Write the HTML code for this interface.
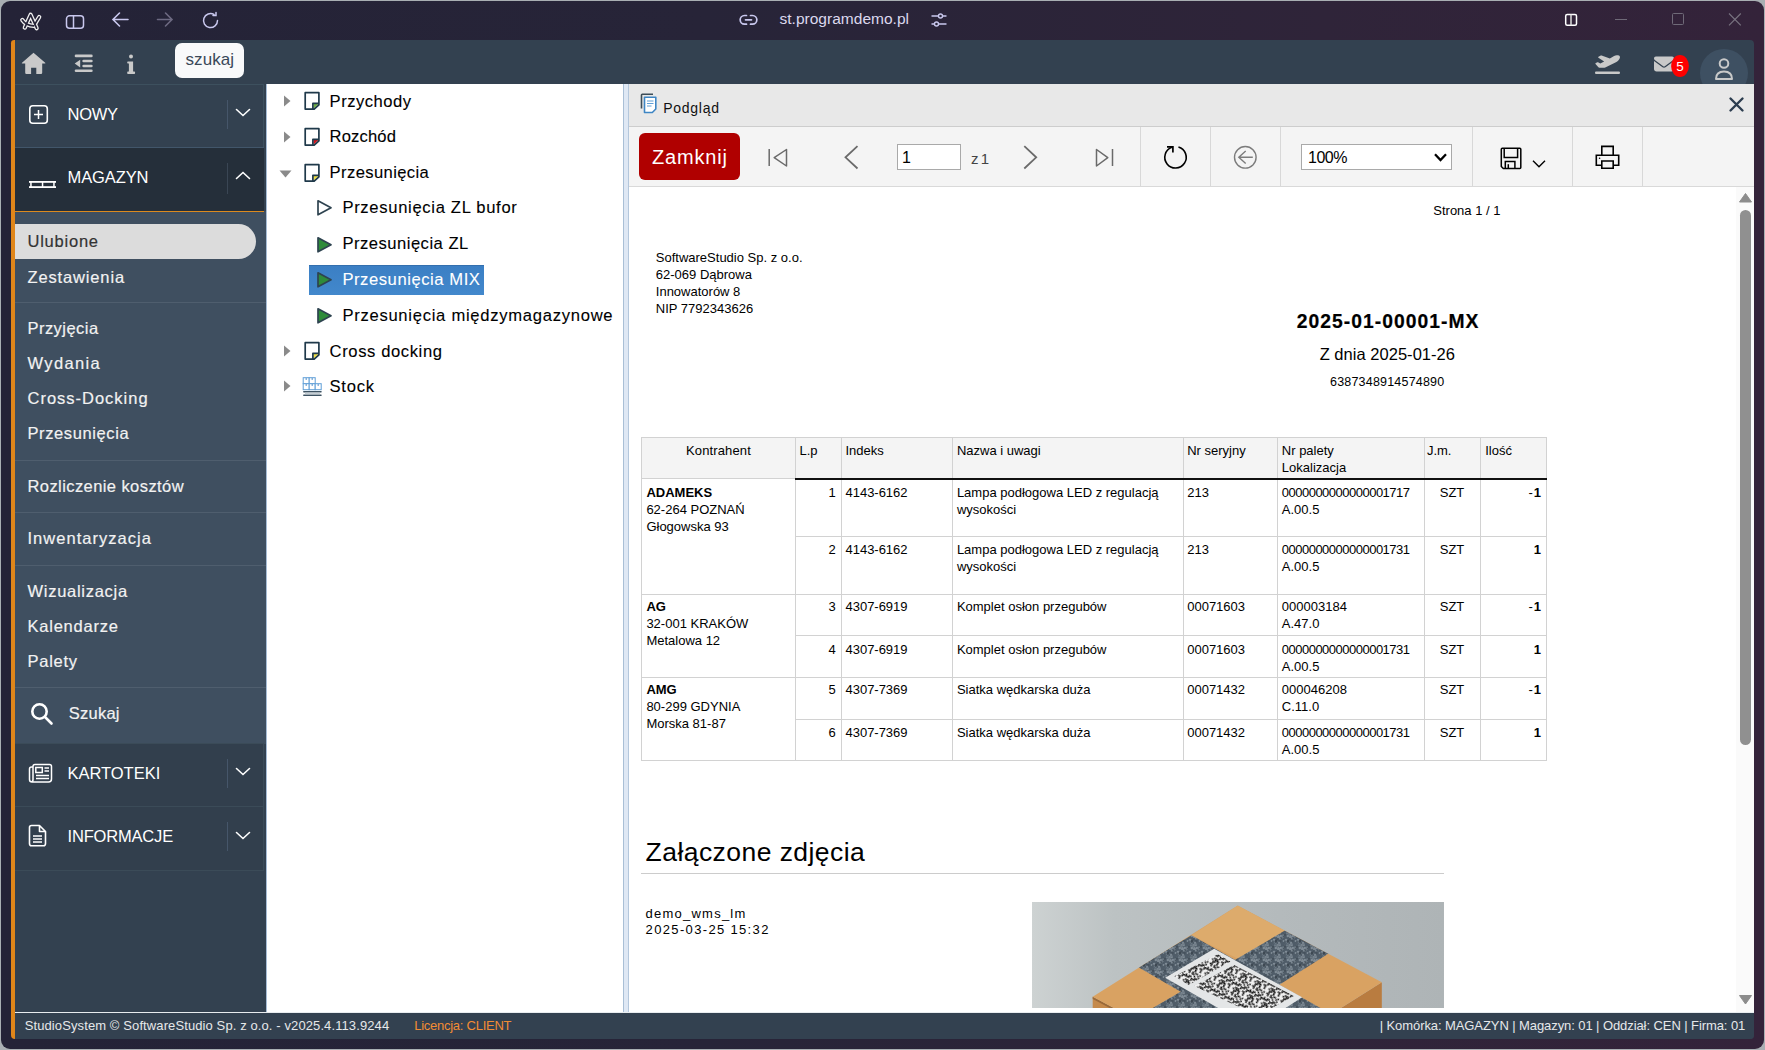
<!DOCTYPE html><html><head><meta charset="utf-8"><style>*{box-sizing:border-box;margin:0;padding:0}
html,body{width:1765px;height:1050px;overflow:hidden;background:#a9afb3;font-family:"Liberation Sans",sans-serif;position:relative}
.a{position:absolute}
.t{position:absolute;white-space:nowrap;font-family:"Liberation Sans",sans-serif}
svg{position:absolute;overflow:visible}
</style></head><body><div class="a" style="left:1px;top:1px;width:1763px;height:1048px;border-radius:9px;background:linear-gradient(90deg,#242337 0%,#272438 40%,#2f2439 75%,#34233a 100%)"></div>
<div class="a" style="left:11px;top:40px;width:1743px;height:999px;background:#334150;border-radius:5px 4px 4px 6px"></div>
<div class="a" style="left:11px;top:40px;width:4px;height:999px;background:#e0861a;border-radius:5px 0 0 6px"></div>
<svg style="left:16px;top:8px;" width="30" height="26" viewBox="0 0 30 26"><g fill="none" stroke-linecap="round" stroke-linejoin="round"><g stroke="#f0f0f0" stroke-width="4.3"><path d="M8.8 19.6 L14.6 6.8 L20.6 20.2"/><path d="M6.3 12 Q10 17.5 17.8 17.8"/><path d="M19.2 15.6 L23.2 9"/></g><g stroke="#252337" stroke-width="1.7"><path d="M8.8 19.6 L14.6 6.8 L20.6 20.2"/><path d="M6.3 12 Q10 17.5 17.8 17.8"/><path d="M19.2 15.6 L23.2 9"/></g></g></svg>
<svg style="left:65px;top:14px;" width="20" height="16" viewBox="0 0 20 16"><g fill="none" stroke="#c9c8ee" stroke-width="1.5"><rect x="1.5" y="1.8" width="17" height="12.5" rx="3"/><line x1="8.5" y1="1.8" x2="8.5" y2="14.3"/></g></svg>
<svg style="left:111px;top:11px;" width="18" height="18" viewBox="0 0 18 18"><g fill="none" stroke="#c9c8ee" stroke-width="1.6" stroke-linecap="round"><path d="M17 8.5 H2.5 M8.5 2 L2 8.5 L8.5 15"/></g></svg>
<svg style="left:156px;top:11px;" width="18" height="18" viewBox="0 0 18 18"><g fill="none" stroke="#6d6a82" stroke-width="1.6" stroke-linecap="round"><path d="M1.5 8.5 H16 M9.5 2 L16 8.5 L9.5 15"/></g></svg>
<svg style="left:201px;top:11px;" width="19" height="19" viewBox="0 0 19 19"><g fill="none" stroke="#c9c8ee" stroke-width="1.5" stroke-linecap="round"><path d="M16.5 9.5 A7 7 0 1 1 13 3.5 M15 1.5 V4.5 H12"/></g></svg>
<svg style="left:739px;top:13px;" width="19" height="14" viewBox="0 0 19 14"><g fill="none" stroke="#c9c8ee" stroke-width="1.7" stroke-linecap="round"><path d="M7.5 2.5 H5.5 A4.3 4.3 0 0 0 5.5 11.2 H7.5 M11.5 2.5 H13.5 A4.3 4.3 0 0 1 13.5 11.2 H11.5 M6.5 6.85 H12.5"/></g></svg>
<div class="t" style="left:779.50px;top:11.38px;font-size:15.5px;line-height:15.5px;color:#dcd9ee;letter-spacing:0.017px;">st.programdemo.pl</div>
<svg style="left:930px;top:12px;" width="18" height="16" viewBox="0 0 18 16"><g fill="none" stroke="#c9c8ee" stroke-width="1.4" stroke-linecap="round"><path d="M2 4 H16 M2 12 H16"/><circle cx="10.5" cy="4" r="2" fill="#282438"/><circle cx="6.5" cy="12" r="2" fill="#282438"/></g></svg>
<svg style="left:1563px;top:12px;" width="16" height="16" viewBox="0 0 16 16"><g fill="none" stroke="#fff" stroke-width="1.5"><rect x="2.7" y="2.5" width="10.8" height="10.8" rx="1.5"/><line x1="8" y1="2.5" x2="8" y2="13.3" stroke="#ddd"/></g></svg>
<div class="a" style="left:1615px;top:19px;width:12px;height:1.2px;background:#6f6a78"></div>
<div class="a" style="left:1672px;top:13px;width:12px;height:12px;border:1.2px solid #6f6a78;border-radius:1.5px"></div>
<svg style="left:1728px;top:13px;" width="14" height="13" viewBox="0 0 14 13"><g stroke="#77727f" stroke-width="1.2"><path d="M1 0.5 L12.8 12.3 M12.8 0.5 L1 12.3"/></g></svg>
<div class="a" style="left:15px;top:84px;width:1739px;height:1px;background:#3c5461"></div>
<svg style="left:21px;top:52px;" width="26" height="23" viewBox="0 0 26 23"><path fill="#c9c9c9" d="M12.5 0.8 L24.2 10.8 Q24.8 11.5 24 11.5 H21.2 V20.8 Q21.2 22 20 22 H15.3 V15.7 H10.1 V22 H5.4 Q4.2 22 4.2 20.8 V11.5 H1.2 Q0.4 11.5 1 10.8 Z"/></svg>
<svg style="left:73px;top:53px;" width="22" height="21" viewBox="0 0 22 21"><g fill="#c9c9c9"><rect x="1.7" y="1.6" width="18" height="2.6" rx="1.3"/><rect x="9.3" y="6.7" width="10.4" height="2.6" rx="1.3"/><rect x="9.3" y="11.7" width="10.4" height="2.6" rx="1.3"/><rect x="1.7" y="16.5" width="18" height="2.6" rx="1.3"/><path d="M1.7 10.5 L7.2 6.7 V14.4 Z"/></g></svg>
<svg style="left:126px;top:53px;" width="11" height="22" viewBox="0 0 11 22"><g fill="#c9c9c9"><circle cx="5" cy="3.6" r="2"/><path d="M1.9 8.5 H7.1 V18.5 H8.3 Q9.1 18.5 9.1 19.5 V20 Q9.1 20.9 8.3 20.9 H1.9 Q1.2 20.9 1.2 20 V19.5 Q1.2 18.5 1.9 18.5 H2.9 V10.6 H1.9 Q1.2 10.6 1.2 9.6 V9.3 Q1.2 8.5 1.9 8.5 Z"/></g></svg>
<div class="a" style="left:175px;top:43px;width:69px;height:35px;background:#f8f9fa;border-radius:7px"></div>
<div class="t" style="left:185.50px;top:51.21px;font-size:17px;line-height:17px;color:#3a4858;letter-spacing:0.064px;">szukaj</div>
<svg style="left:1595px;top:54px;" width="25" height="20" viewBox="0 0 640 512"><path fill="#c9c9c9" d="M381 114.9L186.1 41.8c-16.7-6.2-35.2-5.3-51.1 2.7L89.1 67.4C78 73 77.2 88.5 87.6 95.2l146.9 94.5L136 240 77.8 214.1c-8.7-3.9-18.8-3.7-27.3 .6L18.3 230.8c-9.3 4.7-11.8 16.8-5 24.7l73.1 85.3c6.1 7.1 15 11.2 24.3 11.2H248.4c5 0 9.9-1.2 14.3-3.4L535.6 212.2c46.5-23.3 82.5-63.3 100.8-112C648.9 66.9 624.6 32 588.9 32H558.6c-24.1 0-47.9 5.7-69.5 16.5L381 114.9zM0 480c0 17.7 14.3 32 32 32H608c17.7 0 32-14.3 32-32s-14.3-32-32-32H32c-17.7 0-32 14.3-32 32z"/></svg>
<svg style="left:1654px;top:53.5px;" width="20" height="20" viewBox="0 0 512 512"><path fill="#c9c9c9" d="M48 64C21.5 64 0 85.5 0 112c0 15.1 7.1 29.3 19.2 38.4L236.8 313.6c11.4 8.5 27 8.5 38.4 0L492.8 150.4c12.1-9.1 19.2-23.3 19.2-38.4c0-26.5-21.5-48-48-48H48zM0 176V384c0 35.3 28.7 64 64 64H448c35.3 0 64-28.7 64-64V176L294.4 339.2c-22.8 17.1-54 17.1-76.8 0L0 176z"/></svg>
<svg style="left:1671px;top:55px;" width="18" height="22" viewBox="0 0 18 22"><ellipse cx="9" cy="11" rx="8.9" ry="11.1" fill="#ff0000"/></svg>
<div class="t" style="left:1676.35px;top:59.77px;font-size:13.5px;line-height:13.5px;color:#fff;">5</div>
<svg style="left:1700px;top:49px;clip-path:inset(0 0 13px 0)" width="48" height="48" viewBox="0 0 48 48"><circle cx="24" cy="24" r="24" fill="#3e5062"/><g fill="none" stroke="#c9c9c9" stroke-width="2"><circle cx="24" cy="14.5" r="4.3"/><path d="M16 30 Q16 22.5 24 22.5 Q32 22.5 32 30 Z" stroke-linejoin="round"/></g></svg>
<div class="a" style="left:15px;top:84px;width:251px;height:928px;background:#334150"></div>
<div class="a" style="left:15px;top:211px;width:251px;height:533px;background:#3f4f60"></div>
<div class="a" style="left:15px;top:84px;width:249px;height:64px;background:#334150;border:1px solid #3d505e;border-left:none"></div>
<div class="a" style="left:15px;top:148px;width:249px;height:63px;background:#252f3a"></div>
<div class="a" style="left:15px;top:147px;width:249px;height:1px;background:#42566a"></div>
<div class="a" style="left:15px;top:211px;width:249px;height:1px;background:#dc8a1e"></div>
<div class="a" style="left:227px;top:100px;width:1px;height:29px;background:#46566a"></div>
<div class="a" style="left:227px;top:163px;width:1px;height:31px;background:#3a4654"></div>
<svg style="left:235px;top:108px;" width="16" height="9" viewBox="0 0 16 9"><path d="M1.5 1.5 L8 7.5 L14.5 1.5" fill="none" stroke="#fff" stroke-width="1.6" stroke-linecap="round"/></svg>
<svg style="left:235px;top:171px;" width="16" height="9" viewBox="0 0 16 9"><path d="M1.5 7.5 L8 1.5 L14.5 7.5" fill="none" stroke="#fff" stroke-width="1.6" stroke-linecap="round"/></svg>
<svg style="left:28px;top:104px;" width="22" height="22" viewBox="0 0 22 22"><g fill="none" stroke="#fff" stroke-width="1.6"><rect x="1.8" y="1.8" width="17.5" height="17.5" rx="3"/><path d="M10.5 6 V15 M6 10.5 H15" stroke-width="1.5"/></g></svg>
<div class="t" style="left:67.50px;top:106.23px;font-size:16.5px;line-height:16.5px;color:#fff;letter-spacing:-0.277px;">NOWY</div>
<svg style="left:28px;top:180px;" width="30" height="10" viewBox="0 0 30 10"><g fill="#fff"><rect x="1" y="1" width="27" height="1.8"/><rect x="1" y="6.2" width="27" height="1.8"/><rect x="2.2" y="1" width="1.5" height="7"/><rect x="13.8" y="1" width="1.5" height="7"/><rect x="25.2" y="1" width="1.5" height="7"/></g></svg>
<div class="t" style="left:67.50px;top:169.03px;font-size:16.5px;line-height:16.5px;color:#fff;letter-spacing:-0.099px;">MAGAZYN</div>
<div class="a" style="left:15px;top:224px;width:241px;height:35px;background:#dcdcdc;border-radius:0 17.5px 17.5px 0"></div>
<div class="t" style="left:27.50px;top:232.83px;font-size:16.5px;line-height:16.5px;color:#333;letter-spacing:0.768px;-webkit-text-stroke:0.18px currentColor;">Ulubione</div>
<div class="t" style="left:27.50px;top:268.83px;font-size:16.5px;line-height:16.5px;color:#f2f2f2;letter-spacing:0.854px;-webkit-text-stroke:0.18px currentColor;">Zestawienia</div>
<div class="t" style="left:27.50px;top:320.33px;font-size:16.5px;line-height:16.5px;color:#f2f2f2;letter-spacing:0.455px;-webkit-text-stroke:0.18px currentColor;">Przyjęcia</div>
<div class="t" style="left:27.50px;top:355.03px;font-size:16.5px;line-height:16.5px;color:#f2f2f2;letter-spacing:1.372px;-webkit-text-stroke:0.18px currentColor;">Wydania</div>
<div class="t" style="left:27.50px;top:390.03px;font-size:16.5px;line-height:16.5px;color:#f2f2f2;letter-spacing:0.992px;-webkit-text-stroke:0.18px currentColor;">Cross-Docking</div>
<div class="t" style="left:27.50px;top:424.83px;font-size:16.5px;line-height:16.5px;color:#f2f2f2;letter-spacing:0.602px;-webkit-text-stroke:0.18px currentColor;">Przesunięcia</div>
<div class="t" style="left:27.50px;top:478.33px;font-size:16.5px;line-height:16.5px;color:#f2f2f2;letter-spacing:0.417px;-webkit-text-stroke:0.18px currentColor;">Rozliczenie kosztów</div>
<div class="t" style="left:27.50px;top:530.03px;font-size:16.5px;line-height:16.5px;color:#f2f2f2;letter-spacing:1.025px;-webkit-text-stroke:0.18px currentColor;">Inwentaryzacja</div>
<div class="t" style="left:27.50px;top:583.03px;font-size:16.5px;line-height:16.5px;color:#f2f2f2;letter-spacing:0.718px;-webkit-text-stroke:0.18px currentColor;">Wizualizacja</div>
<div class="t" style="left:27.50px;top:618.03px;font-size:16.5px;line-height:16.5px;color:#f2f2f2;letter-spacing:0.770px;-webkit-text-stroke:0.18px currentColor;">Kalendarze</div>
<div class="t" style="left:27.50px;top:653.03px;font-size:16.5px;line-height:16.5px;color:#f2f2f2;letter-spacing:0.749px;-webkit-text-stroke:0.18px currentColor;">Palety</div>
<div class="a" style="left:15px;top:302px;width:251px;height:1px;background:#4f5e6e"></div>
<div class="a" style="left:15px;top:460px;width:251px;height:1px;background:#4f5e6e"></div>
<div class="a" style="left:15px;top:512px;width:251px;height:1px;background:#4f5e6e"></div>
<div class="a" style="left:15px;top:565px;width:251px;height:1px;background:#4f5e6e"></div>
<div class="a" style="left:15px;top:687px;width:251px;height:1px;background:#4f5e6e"></div>
<svg style="left:30px;top:702px;" width="24" height="24" viewBox="0 0 24 24"><g fill="none" stroke="#fff" stroke-width="2.6" stroke-linecap="round"><circle cx="9.5" cy="9.5" r="7.2"/><path d="M15 15 L21.5 21.5"/></g></svg>
<div class="t" style="left:68.70px;top:705.03px;font-size:16.5px;line-height:16.5px;color:#f2f2f2;letter-spacing:0.257px;-webkit-text-stroke:0.18px currentColor;">Szukaj</div>
<div class="a" style="left:15px;top:743px;width:249px;height:64px;background:#323f4d;border:1px solid #3b4b58;border-left:none"></div>
<div class="a" style="left:15px;top:806px;width:249px;height:65px;background:#323f4d;border:1px solid #3b4b58;border-left:none"></div>
<div class="a" style="left:227px;top:759px;width:1px;height:29px;background:#46566a"></div>
<div class="a" style="left:227px;top:822px;width:1px;height:29px;background:#46566a"></div>
<svg style="left:235px;top:767px;" width="16" height="9" viewBox="0 0 16 9"><path d="M1.5 1.5 L8 7.5 L14.5 1.5" fill="none" stroke="#fff" stroke-width="1.6" stroke-linecap="round"/></svg>
<svg style="left:235px;top:831px;" width="16" height="9" viewBox="0 0 16 9"><path d="M1.5 1.5 L8 7.5 L14.5 1.5" fill="none" stroke="#fff" stroke-width="1.6" stroke-linecap="round"/></svg>
<svg style="left:28px;top:763px;" width="25" height="21" viewBox="0 0 25 21"><g fill="none" stroke="#fff" stroke-width="1.5"><path d="M4.5 4 H3.5 Q1.5 4 1.5 6 V16.5 Q1.5 19 4 19 H20.5 Q23.5 19 23.5 16 V3.5 Q23.5 1.5 21.5 1.5 H7 Q5 1.5 5 3.5 V16.5 Q5 19 3 19"/><rect x="7.8" y="4.5" width="6.5" height="5"/><path d="M16.5 5 H21 M16.5 8 H21 M8 12.5 H21 M8 15.5 H21"/></g></svg>
<div class="t" style="left:67.50px;top:764.63px;font-size:16.5px;line-height:16.5px;color:#fff;letter-spacing:-0.026px;">KARTOTEKI</div>
<svg style="left:28px;top:824px;" width="20" height="24" viewBox="0 0 20 24"><g fill="none" stroke="#fff" stroke-width="1.6" stroke-linejoin="round"><path d="M3.5 1.5 H11.5 L17.5 7.5 V19.5 Q17.5 21.8 15.5 21.8 H3.5 Q1.5 21.8 1.5 19.5 V3.5 Q1.5 1.5 3.5 1.5 Z M11.5 1.5 V7.5 H17.5"/><path d="M5 12 H14 M5 15 H14 M5 18 H14" stroke-width="1.5"/></g></svg>
<div class="t" style="left:67.50px;top:827.73px;font-size:16.5px;line-height:16.5px;color:#fff;letter-spacing:-0.172px;">INFORMACJE</div>
<div class="a" style="left:266px;top:84px;width:357px;height:928px;background:#fff"></div>
<div class="a" style="left:266px;top:84px;width:1px;height:928px;background:#a7bdd6"></div>
<svg style="left:283px;top:95.0px;" width="8" height="12" viewBox="0 0 8 12"><path d="M1 0.5 L7.5 6 L1 11.5 Z" fill="#8a8a8a"/></svg>
<svg style="left:303px;top:90.0px;" width="18" height="21" viewBox="0 0 18 21"><g stroke="#1f394a" stroke-width="1.7" stroke-linejoin="round" fill="none"><path d="M10.5 14 H15.4 L10.5 18.7 Z" fill="#6fb040" stroke="none"/><path d="M2.2 2.7 H15.9 V14.9 L11.2 19.1 H2.2 Z"/><path d="M9.9 19.1 V13.3 H15.9"/></g></svg>
<div class="t" style="left:329.60px;top:93.65px;font-size:16.6px;line-height:16.6px;color:#000;letter-spacing:0.489px;-webkit-text-stroke:0.1px currentColor;">Przychody</div>
<svg style="left:283px;top:130.7px;" width="8" height="12" viewBox="0 0 8 12"><path d="M1 0.5 L7.5 6 L1 11.5 Z" fill="#8a8a8a"/></svg>
<svg style="left:303px;top:125.69999999999999px;" width="18" height="21" viewBox="0 0 18 21"><g stroke="#1f394a" stroke-width="1.7" stroke-linejoin="round" fill="none"><path d="M10.5 14 H15.4 L10.5 18.7 Z" fill="#d4141c" stroke="none"/><path d="M2.2 2.7 H15.9 V14.9 L11.2 19.1 H2.2 Z"/><path d="M9.9 19.1 V13.3 H15.9"/></g></svg>
<div class="t" style="left:329.60px;top:129.35px;font-size:16.6px;line-height:16.6px;color:#000;letter-spacing:0.147px;-webkit-text-stroke:0.1px currentColor;">Rozchód</div>
<svg style="left:279px;top:169.6px;" width="13" height="8" viewBox="0 0 13 8"><path d="M0.5 0.5 H12.5 L6.5 7.5 Z" fill="#8a8a8a"/></svg>
<svg style="left:303px;top:161.7px;" width="18" height="21" viewBox="0 0 18 21"><g stroke="#1f394a" stroke-width="1.7" stroke-linejoin="round" fill="none"><path d="M10.5 14 H15.4 L10.5 18.7 Z" fill="#f0e040" stroke="none"/><path d="M2.2 2.7 H15.9 V14.9 L11.2 19.1 H2.2 Z"/><path d="M9.9 19.1 V13.3 H15.9"/></g></svg>
<div class="t" style="left:329.60px;top:165.35px;font-size:16.6px;line-height:16.6px;color:#000;letter-spacing:0.386px;-webkit-text-stroke:0.1px currentColor;">Przesunięcia</div>
<div class="a" style="left:309px;top:265px;width:175px;height:30px;background:linear-gradient(#3b7fc4,#4288cc);border-top:1px solid #336fae"></div>
<svg style="left:315.5px;top:199.10000000000002px;" width="17" height="18" viewBox="0 0 17 18"><path d="M2 1.8 L15 8.8 L2 15.8 Z" fill="#fff" stroke="#2e4350" stroke-width="1.7" stroke-linejoin="round"/></svg>
<div class="t" style="left:342.40px;top:200.05px;font-size:16.6px;line-height:16.6px;color:#000;letter-spacing:0.682px;-webkit-text-stroke:0.1px currentColor;">Przesunięcia ZL bufor</div>
<svg style="left:315.5px;top:235.5px;" width="17" height="18" viewBox="0 0 17 18"><path d="M2 1.8 L15 8.8 L2 15.8 Z" fill="#2e8b3a" stroke="#2e4350" stroke-width="1.7" stroke-linejoin="round"/></svg>
<div class="t" style="left:342.40px;top:236.45px;font-size:16.6px;line-height:16.6px;color:#000;letter-spacing:0.491px;-webkit-text-stroke:0.1px currentColor;">Przesunięcia ZL</div>
<svg style="left:315.5px;top:271.0px;" width="17" height="18" viewBox="0 0 17 18"><path d="M2 1.8 L15 8.8 L2 15.8 Z" fill="#2e8b3a" stroke="#2e4350" stroke-width="1.7" stroke-linejoin="round"/></svg>
<div class="t" style="left:342.40px;top:271.95px;font-size:16.6px;line-height:16.6px;color:#fff;letter-spacing:0.562px;-webkit-text-stroke:0.1px currentColor;">Przesunięcia MIX</div>
<svg style="left:315.5px;top:307.0px;" width="17" height="18" viewBox="0 0 17 18"><path d="M2 1.8 L15 8.8 L2 15.8 Z" fill="#2e8b3a" stroke="#2e4350" stroke-width="1.7" stroke-linejoin="round"/></svg>
<div class="t" style="left:342.40px;top:307.95px;font-size:16.6px;line-height:16.6px;color:#000;letter-spacing:0.723px;-webkit-text-stroke:0.1px currentColor;">Przesunięcia międzymagazynowe</div>
<svg style="left:283px;top:344.90000000000003px;" width="8" height="12" viewBox="0 0 8 12"><path d="M1 0.5 L7.5 6 L1 11.5 Z" fill="#8a8a8a"/></svg>
<svg style="left:303px;top:339.90000000000003px;" width="18" height="21" viewBox="0 0 18 21"><g stroke="#1f394a" stroke-width="1.7" stroke-linejoin="round" fill="none"><path d="M10.5 14 H15.4 L10.5 18.7 Z" fill="#f0e040" stroke="none"/><path d="M2.2 2.7 H15.9 V14.9 L11.2 19.1 H2.2 Z"/><path d="M9.9 19.1 V13.3 H15.9"/></g></svg>
<div class="t" style="left:329.60px;top:343.55px;font-size:16.6px;line-height:16.6px;color:#000;letter-spacing:0.602px;-webkit-text-stroke:0.1px currentColor;">Cross docking</div>
<svg style="left:283px;top:380.1px;" width="8" height="12" viewBox="0 0 8 12"><path d="M1 0.5 L7.5 6 L1 11.5 Z" fill="#8a8a8a"/></svg>
<svg style="left:302px;top:376px;" width="21" height="22" viewBox="0 0 21 22"><g fill="#fff" stroke="#5f9fd8" stroke-width="1"><rect x="1.2" y="1.7" width="6" height="6"/><rect x="7.2" y="1.7" width="6" height="6"/><rect x="1.2" y="7.7" width="6" height="6"/><rect x="7.2" y="7.7" width="6" height="6"/><rect x="13.2" y="7.7" width="6" height="6"/></g><g fill="#3d82c4"><circle cx="4.2" cy="3" r="0.8"/><circle cx="10.2" cy="3" r="0.8"/><circle cx="4.2" cy="9" r="0.8"/><circle cx="10.2" cy="9" r="0.8"/><circle cx="16.2" cy="9" r="0.8"/></g><g fill="none" stroke="#3d5262" stroke-width="1.5" stroke-linecap="round"><path d="M1.8 15.7 H19 M1.8 19.2 H19"/></g><g fill="#c5ced4"><rect x="3" y="16.6" width="15" height="1.6"/></g></svg>
<div class="t" style="left:329.60px;top:378.75px;font-size:16.6px;line-height:16.6px;color:#000;letter-spacing:0.713px;-webkit-text-stroke:0.1px currentColor;">Stock</div>
<div class="a" style="left:623px;top:84px;width:6px;height:928px;background:#dfe8f4;border-left:1px solid #a9bfd6;border-right:1px solid #b4c7dc"></div>
<div class="a" style="left:629px;top:84px;width:1125px;height:928px;background:#fff"></div>
<div class="a" style="left:629px;top:84px;width:1125px;height:43px;background:#e8e8e8;border-bottom:1px solid #cdcdcd"></div>
<div class="a" style="left:629px;top:127px;width:1125px;height:60px;background:#f4f4f4;border-bottom:1px solid #d9d9d9"></div>
<svg style="left:640px;top:93px;" width="19" height="21" viewBox="0 0 19 21"><g fill="none" stroke-linejoin="round"><path d="M1.5 15.5 V2 Q1.5 1.2 2.3 1.2 H13" stroke="#3c4d58" stroke-width="1.6"/><path d="M4.5 4.3 H15.8 V16 L12.3 19.5 H4.5 Z" fill="#fff" stroke="#3f86c4" stroke-width="1.6"/><path d="M7 8 H13.5 M7 10.5 H13.5 M7 13 H11.5" stroke="#5e9ed6" stroke-width="1.2"/></g></svg>
<div class="t" style="left:663.20px;top:101.05px;font-size:14px;line-height:14px;color:#111;letter-spacing:0.737px;">Podgląd</div>
<svg style="left:1729px;top:97px;" width="15" height="15" viewBox="0 0 15 15"><path d="M1.5 1.5 L13.5 13.5 M13.5 1.5 L1.5 13.5" stroke="#2c3d4f" stroke-width="2.4" stroke-linecap="round"/></svg>
<div class="a" style="left:639px;top:133px;width:101px;height:47px;background:#b00000;border-radius:6px"></div>
<div class="t" style="left:652.00px;top:147.07px;font-size:20px;line-height:20px;color:#fff;letter-spacing:0.830px;">Zamknij</div>
<svg style="left:766px;top:147px;" width="24" height="22" viewBox="0 0 24 22"><g fill="none" stroke="#6a6a6a" stroke-width="1.5"><path d="M3.2 2 V19"/><path d="M20.5 2.5 V19 L8.2 10.7 Z" stroke-linejoin="round"/></g></svg>
<svg style="left:843px;top:145px;" width="18" height="25" viewBox="0 0 18 25"><path d="M14.5 1.2 L2.5 12.3 L14.5 23.5" fill="none" stroke="#6a6a6a" stroke-width="1.8"/></svg>
<div class="a" style="left:897px;top:144px;width:64px;height:26px;background:#fff;border:1px solid #a9a9a9"></div>
<div class="t" style="left:902.00px;top:150.46px;font-size:16px;line-height:16px;color:#000;">1</div>
<div class="t" style="left:971.00px;top:151.30px;font-size:15px;line-height:15px;color:#444;letter-spacing:-1.005px;">z 1</div>
<svg style="left:1021px;top:145px;" width="18" height="25" viewBox="0 0 18 25"><path d="M3.3 1.2 L15.2 12.3 L3.3 23.5" fill="none" stroke="#6a6a6a" stroke-width="1.8"/></svg>
<svg style="left:1094px;top:147px;" width="22" height="22" viewBox="0 0 22 22"><g fill="none" stroke="#6a6a6a" stroke-width="1.5"><path d="M2.5 2.5 V19 L13.8 10.7 Z" stroke-linejoin="round"/><path d="M18.5 2 V19"/></g></svg>
<div class="a" style="left:1140px;top:127px;width:1px;height:59px;background:#d8d8d8"></div>
<div class="a" style="left:1210px;top:127px;width:1px;height:59px;background:#d8d8d8"></div>
<div class="a" style="left:1280px;top:127px;width:1px;height:59px;background:#d8d8d8"></div>
<div class="a" style="left:1472px;top:127px;width:1px;height:59px;background:#d8d8d8"></div>
<div class="a" style="left:1572px;top:127px;width:1px;height:59px;background:#d8d8d8"></div>
<div class="a" style="left:1642px;top:127px;width:1px;height:59px;background:#d8d8d8"></div>
<svg style="left:1162px;top:143px;" width="28" height="28" viewBox="0 0 28 28"><g fill="none" stroke="#000" stroke-width="1.7"><path d="M16.45 4.01 A10.7 10.7 0 1 1 9.84 4.25" stroke-width="1.6"/><path d="M5 3.9 H10.9 V9.6" stroke-width="1.7"/></g></svg>
<svg style="left:1232px;top:144px;" width="27" height="27" viewBox="0 0 27 27"><g fill="none" stroke="#7c7c7c" stroke-width="1.4"><circle cx="13.3" cy="13.3" r="10.8"/><path d="M20.8 13.3 H6.8 M13.7 7.1 L6.8 13.3 L13.7 19.6"/></g></svg>
<div class="a" style="left:1301px;top:144px;width:151px;height:26px;background:#fff;border:1px solid #a9a9a9"></div>
<div class="t" style="left:1308.00px;top:150.46px;font-size:16px;line-height:16px;color:#000;letter-spacing:-0.476px;">100%</div>
<svg style="left:1433px;top:152px;" width="15" height="11" viewBox="0 0 15 11"><path d="M2 2.3 L7.5 8 L13 2.3" fill="none" stroke="#000" stroke-width="2.3"/></svg>
<svg style="left:1499px;top:146px;" width="24" height="24" viewBox="0 0 24 24"><g fill="none" stroke="#000" stroke-width="1.5" stroke-linejoin="miter"><path d="M3.3 2.3 H20.8 Q21.8 2.3 21.8 3.3 V21.5 Q21.8 22.5 20.8 22.5 H4.3 L2.3 20.5 V3.3 Q2.3 2.3 3.3 2.3 Z"/><path d="M5.2 2.3 V11.6 H18.6 V2.3"/><path d="M6.3 22.5 V15.6 H15.9 V22.5"/><path d="M9.3 18.2 V22.5"/></g></svg>
<svg style="left:1531px;top:158px;" width="16" height="11" viewBox="0 0 16 11"><path d="M2 2.8 L8 8.7 L14 2.8" fill="none" stroke="#000" stroke-width="1.4"/></svg>
<svg style="left:1594px;top:145px;" width="27" height="26" viewBox="0 0 27 26"><g fill="none" stroke="#000" stroke-width="1.6" stroke-linejoin="miter"><path d="M7.8 10.3 V1.4 H19.2 V10.3"/><path d="M7.8 20.2 H2.3 V10.3 H24.7 V20.2 H19.2"/><path d="M7.8 16 H19.2 V23.2 H7.8 Z"/></g><circle cx="5.6" cy="13.2" r="0.8" fill="#000"/></svg>
<div class="a" style="left:1736px;top:187px;width:18px;height:825px;background:#fafafa"></div>
<svg style="left:1739px;top:193px;" width="13" height="10" viewBox="0 0 13 10"><path d="M6.5 0.5 L12.5 9 H0.5 Z" fill="#8c8c8c" stroke="#8c8c8c" stroke-linejoin="round" stroke-width="1"/></svg>
<div class="a" style="left:1740px;top:210px;width:11px;height:535px;background:#909090;border-radius:5.5px"></div>
<svg style="left:1739px;top:995px;" width="13" height="10" viewBox="0 0 13 10"><path d="M0.5 0.5 H12.5 L6.5 9 Z" fill="#8c8c8c" stroke="#8c8c8c" stroke-linejoin="round" stroke-width="1"/></svg>
<div class="t" style="left:1433.30px;top:204.00px;font-size:13px;line-height:13px;color:#000;letter-spacing:-0.010px;">Strona 1 / 1</div>
<div class="t" style="left:655.80px;top:251.40px;font-size:13px;line-height:13px;color:#000;">SoftwareStudio Sp. z o.o.</div>
<div class="t" style="left:655.80px;top:268.20px;font-size:13px;line-height:13px;color:#000;">62-069 Dąbrowa</div>
<div class="t" style="left:655.80px;top:285.00px;font-size:13px;line-height:13px;color:#000;">Innowatorów 8</div>
<div class="t" style="left:655.80px;top:302.00px;font-size:13px;line-height:13px;color:#000;">NIP 7792343626</div>
<div class="t" style="left:1296.75px;top:311.66px;font-size:19.3px;line-height:19.3px;color:#000;font-weight:bold;letter-spacing:1.039px;-webkit-text-stroke:0.2px #000;">2025-01-00001-MX</div>
<div class="t" style="left:1319.65px;top:346.03px;font-size:16.5px;line-height:16.5px;color:#000;letter-spacing:0.029px;">Z dnia 2025-01-26</div>
<div class="t" style="left:1330.00px;top:376.32px;font-size:12.5px;line-height:12.5px;color:#000;letter-spacing:0.198px;">6387348914574890</div>
<div class="a" style="left:641px;top:437px;width:906px;height:42px;background:#f4f4f4"></div>
<div class="a" style="left:641px;top:437px;width:906px;height:1px;background:#d2d2d2"></div>
<div class="a" style="left:641px;top:760px;width:906px;height:1px;background:#d2d2d2"></div>
<div class="a" style="left:641px;top:437px;width:1px;height:324px;background:#d2d2d2"></div>
<div class="a" style="left:795px;top:437px;width:1px;height:324px;background:#d2d2d2"></div>
<div class="a" style="left:841px;top:437px;width:1px;height:324px;background:#d2d2d2"></div>
<div class="a" style="left:952px;top:437px;width:1px;height:324px;background:#d2d2d2"></div>
<div class="a" style="left:1183px;top:437px;width:1px;height:324px;background:#d2d2d2"></div>
<div class="a" style="left:1277px;top:437px;width:1px;height:324px;background:#d2d2d2"></div>
<div class="a" style="left:1424px;top:437px;width:1px;height:324px;background:#d2d2d2"></div>
<div class="a" style="left:1480px;top:437px;width:1px;height:324px;background:#d2d2d2"></div>
<div class="a" style="left:1546px;top:437px;width:1px;height:324px;background:#d2d2d2"></div>
<div class="a" style="left:641px;top:478px;width:155px;height:1px;background:#d2d2d2"></div>
<div class="a" style="left:795px;top:478px;width:752px;height:2px;background:#111"></div>
<div class="a" style="left:795px;top:536px;width:752px;height:1px;background:#d2d2d2"></div>
<div class="a" style="left:795px;top:635px;width:752px;height:1px;background:#d2d2d2"></div>
<div class="a" style="left:795px;top:719px;width:752px;height:1px;background:#d2d2d2"></div>
<div class="a" style="left:641px;top:594px;width:906px;height:1px;background:#d2d2d2"></div>
<div class="a" style="left:641px;top:677px;width:906px;height:1px;background:#d2d2d2"></div>
<div class="t" style="left:686.05px;top:444.20px;font-size:13px;line-height:13px;color:#000;letter-spacing:0.121px;">Kontrahent</div>
<div class="t" style="left:799.50px;top:444.20px;font-size:13px;line-height:13px;color:#000;">L.p</div>
<div class="t" style="left:845.50px;top:444.20px;font-size:13px;line-height:13px;color:#000;">Indeks</div>
<div class="t" style="left:956.90px;top:444.20px;font-size:13px;line-height:13px;color:#000;">Nazwa i uwagi</div>
<div class="t" style="left:1187.20px;top:444.20px;font-size:13px;line-height:13px;color:#000;">Nr seryjny</div>
<div class="t" style="left:1281.80px;top:444.20px;font-size:13px;line-height:13px;color:#000;">Nr palety</div>
<div class="t" style="left:1281.80px;top:461.00px;font-size:13px;line-height:13px;color:#000;">Lokalizacja</div>
<div class="t" style="left:1426.90px;top:444.20px;font-size:13px;line-height:13px;color:#000;">J.m.</div>
<div class="t" style="left:1485.20px;top:444.20px;font-size:13px;line-height:13px;color:#000;">Ilość</div>
<div class="t" style="left:646.40px;top:485.50px;font-size:13px;line-height:13px;color:#000;font-weight:bold;">ADAMEKS</div>
<div class="t" style="left:646.40px;top:502.50px;font-size:13px;line-height:13px;color:#000;">62-264 POZNAŃ</div>
<div class="t" style="left:646.40px;top:519.50px;font-size:13px;line-height:13px;color:#000;">Głogowska 93</div>
<div class="t" style="left:646.40px;top:600.20px;font-size:13px;line-height:13px;color:#000;font-weight:bold;">AG</div>
<div class="t" style="left:646.40px;top:617.20px;font-size:13px;line-height:13px;color:#000;">32-001 KRAKÓW</div>
<div class="t" style="left:646.40px;top:634.20px;font-size:13px;line-height:13px;color:#000;">Metalowa 12</div>
<div class="t" style="left:646.40px;top:683.30px;font-size:13px;line-height:13px;color:#000;font-weight:bold;">AMG</div>
<div class="t" style="left:646.40px;top:700.30px;font-size:13px;line-height:13px;color:#000;">80-299 GDYNIA</div>
<div class="t" style="left:646.40px;top:717.30px;font-size:13px;line-height:13px;color:#000;">Morska 81-87</div>
<div class="t" style="left:828.57px;top:485.50px;font-size:13px;line-height:13px;color:#000;">1</div>
<div class="t" style="left:845.50px;top:485.50px;font-size:13px;line-height:13px;color:#000;letter-spacing:-0.021px;">4143-6162</div>
<div class="t" style="left:956.90px;top:485.50px;font-size:13px;line-height:13px;color:#000;">Lampa podłogowa LED z regulacją</div>
<div class="t" style="left:956.93px;top:502.50px;font-size:13px;line-height:13px;color:#000;">wysokości</div>
<div class="t" style="left:1187.20px;top:485.50px;font-size:13px;line-height:13px;color:#000;">213</div>
<div class="t" style="left:1281.80px;top:485.50px;font-size:13px;line-height:13px;color:#000;letter-spacing:-0.510px;">0000000000000001717</div>
<div class="t" style="left:1281.80px;top:502.50px;font-size:13px;line-height:13px;color:#000;">A.00.5</div>
<div class="t" style="left:1439.72px;top:485.50px;font-size:13px;line-height:13px;color:#000;">SZT</div>
<div class="t" style="left:1533.77px;top:485.50px;font-size:13px;line-height:13px;color:#000;font-weight:bold;">1</div>
<div class="t" style="left:1528.47px;top:485.50px;font-size:13px;line-height:13px;color:#000;">-</div>
<div class="t" style="left:828.57px;top:543.00px;font-size:13px;line-height:13px;color:#000;">2</div>
<div class="t" style="left:845.50px;top:543.00px;font-size:13px;line-height:13px;color:#000;letter-spacing:-0.021px;">4143-6162</div>
<div class="t" style="left:956.90px;top:543.00px;font-size:13px;line-height:13px;color:#000;">Lampa podłogowa LED z regulacją</div>
<div class="t" style="left:956.93px;top:560.00px;font-size:13px;line-height:13px;color:#000;">wysokości</div>
<div class="t" style="left:1187.20px;top:543.00px;font-size:13px;line-height:13px;color:#000;">213</div>
<div class="t" style="left:1281.80px;top:543.00px;font-size:13px;line-height:13px;color:#000;letter-spacing:-0.510px;">0000000000000001731</div>
<div class="t" style="left:1281.80px;top:560.00px;font-size:13px;line-height:13px;color:#000;">A.00.5</div>
<div class="t" style="left:1439.72px;top:543.00px;font-size:13px;line-height:13px;color:#000;">SZT</div>
<div class="t" style="left:1533.77px;top:543.00px;font-size:13px;line-height:13px;color:#000;font-weight:bold;">1</div>
<div class="t" style="left:828.57px;top:600.20px;font-size:13px;line-height:13px;color:#000;">3</div>
<div class="t" style="left:845.50px;top:600.20px;font-size:13px;line-height:13px;color:#000;letter-spacing:-0.021px;">4307-6919</div>
<div class="t" style="left:956.90px;top:600.20px;font-size:13px;line-height:13px;color:#000;">Komplet osłon przegubów</div>
<div class="t" style="left:1187.20px;top:600.20px;font-size:13px;line-height:13px;color:#000;">00071603</div>
<div class="t" style="left:1281.80px;top:600.20px;font-size:13px;line-height:13px;color:#000;">000003184</div>
<div class="t" style="left:1281.80px;top:617.20px;font-size:13px;line-height:13px;color:#000;">A.47.0</div>
<div class="t" style="left:1439.72px;top:600.20px;font-size:13px;line-height:13px;color:#000;">SZT</div>
<div class="t" style="left:1533.77px;top:600.20px;font-size:13px;line-height:13px;color:#000;font-weight:bold;">1</div>
<div class="t" style="left:1528.47px;top:600.20px;font-size:13px;line-height:13px;color:#000;">-</div>
<div class="t" style="left:828.57px;top:642.50px;font-size:13px;line-height:13px;color:#000;">4</div>
<div class="t" style="left:845.50px;top:642.50px;font-size:13px;line-height:13px;color:#000;letter-spacing:-0.021px;">4307-6919</div>
<div class="t" style="left:956.90px;top:642.50px;font-size:13px;line-height:13px;color:#000;">Komplet osłon przegubów</div>
<div class="t" style="left:1187.20px;top:642.50px;font-size:13px;line-height:13px;color:#000;">00071603</div>
<div class="t" style="left:1281.80px;top:642.50px;font-size:13px;line-height:13px;color:#000;letter-spacing:-0.510px;">0000000000000001731</div>
<div class="t" style="left:1281.80px;top:659.50px;font-size:13px;line-height:13px;color:#000;">A.00.5</div>
<div class="t" style="left:1439.72px;top:642.50px;font-size:13px;line-height:13px;color:#000;">SZT</div>
<div class="t" style="left:1533.77px;top:642.50px;font-size:13px;line-height:13px;color:#000;font-weight:bold;">1</div>
<div class="t" style="left:828.57px;top:683.30px;font-size:13px;line-height:13px;color:#000;">5</div>
<div class="t" style="left:845.50px;top:683.30px;font-size:13px;line-height:13px;color:#000;letter-spacing:-0.021px;">4307-7369</div>
<div class="t" style="left:956.90px;top:683.30px;font-size:13px;line-height:13px;color:#000;">Siatka wędkarska duża</div>
<div class="t" style="left:1187.20px;top:683.30px;font-size:13px;line-height:13px;color:#000;">00071432</div>
<div class="t" style="left:1281.80px;top:683.30px;font-size:13px;line-height:13px;color:#000;">000046208</div>
<div class="t" style="left:1281.80px;top:700.30px;font-size:13px;line-height:13px;color:#000;">C.11.0</div>
<div class="t" style="left:1439.72px;top:683.30px;font-size:13px;line-height:13px;color:#000;">SZT</div>
<div class="t" style="left:1533.77px;top:683.30px;font-size:13px;line-height:13px;color:#000;font-weight:bold;">1</div>
<div class="t" style="left:1528.47px;top:683.30px;font-size:13px;line-height:13px;color:#000;">-</div>
<div class="t" style="left:828.57px;top:725.90px;font-size:13px;line-height:13px;color:#000;">6</div>
<div class="t" style="left:845.50px;top:725.90px;font-size:13px;line-height:13px;color:#000;letter-spacing:-0.021px;">4307-7369</div>
<div class="t" style="left:956.90px;top:725.90px;font-size:13px;line-height:13px;color:#000;">Siatka wędkarska duża</div>
<div class="t" style="left:1187.20px;top:725.90px;font-size:13px;line-height:13px;color:#000;">00071432</div>
<div class="t" style="left:1281.80px;top:725.90px;font-size:13px;line-height:13px;color:#000;letter-spacing:-0.510px;">0000000000000001731</div>
<div class="t" style="left:1281.80px;top:742.90px;font-size:13px;line-height:13px;color:#000;">A.00.5</div>
<div class="t" style="left:1439.72px;top:725.90px;font-size:13px;line-height:13px;color:#000;">SZT</div>
<div class="t" style="left:1533.77px;top:725.90px;font-size:13px;line-height:13px;color:#000;font-weight:bold;">1</div>
<div class="t" style="left:645.60px;top:839.47px;font-size:26.5px;line-height:26.5px;color:#000;letter-spacing:0.442px;">Załączone zdjęcia</div>
<div class="a" style="left:641px;top:873px;width:803px;height:1px;background:#cccccc"></div>
<div class="t" style="left:645.60px;top:906.80px;font-size:13px;line-height:13px;color:#000;letter-spacing:1.229px;">demo_wms_lm</div>
<div class="t" style="left:645.60px;top:923.10px;font-size:13px;line-height:13px;color:#000;letter-spacing:1.343px;">2025-03-25 15:32</div>
<svg style="left:1032px;top:902px;overflow:hidden" width="412" height="106.4" viewBox="0 0 412 106.4">
<defs>
<linearGradient id="pbg" x1="0" x2="1" y1="0" y2="0"><stop offset="0" stop-color="#cdd2d2"/><stop offset="0.2" stop-color="#bcc2c3"/><stop offset="0.6" stop-color="#b4babc"/><stop offset="1" stop-color="#aeb4b6"/></linearGradient>
<pattern id="pqr" width="16" height="16" patternUnits="userSpaceOnUse" patternTransform="rotate(28)"><rect width="16" height="16" fill="#f2f2f2"/><g fill="#111"><rect x="0.0" y="0.0" width="1.6" height="1.6"/><rect x="0.0" y="3.2" width="1.6" height="1.6"/><rect x="0.0" y="8.0" width="1.6" height="1.6"/><rect x="0.0" y="9.6" width="1.6" height="1.6"/><rect x="0.0" y="12.8" width="1.6" height="1.6"/><rect x="0.0" y="14.4" width="1.6" height="1.6"/><rect x="1.6" y="1.6" width="1.6" height="1.6"/><rect x="1.6" y="4.8" width="1.6" height="1.6"/><rect x="1.6" y="8.0" width="1.6" height="1.6"/><rect x="3.2" y="1.6" width="1.6" height="1.6"/><rect x="3.2" y="6.4" width="1.6" height="1.6"/><rect x="3.2" y="8.0" width="1.6" height="1.6"/><rect x="3.2" y="11.2" width="1.6" height="1.6"/><rect x="4.8" y="3.2" width="1.6" height="1.6"/><rect x="4.8" y="6.4" width="1.6" height="1.6"/><rect x="4.8" y="11.2" width="1.6" height="1.6"/><rect x="4.8" y="12.8" width="1.6" height="1.6"/><rect x="4.8" y="14.4" width="1.6" height="1.6"/><rect x="6.4" y="1.6" width="1.6" height="1.6"/><rect x="6.4" y="4.8" width="1.6" height="1.6"/><rect x="6.4" y="8.0" width="1.6" height="1.6"/><rect x="6.4" y="9.6" width="1.6" height="1.6"/><rect x="8.0" y="8.0" width="1.6" height="1.6"/><rect x="9.6" y="1.6" width="1.6" height="1.6"/><rect x="9.6" y="6.4" width="1.6" height="1.6"/><rect x="9.6" y="8.0" width="1.6" height="1.6"/><rect x="9.6" y="12.8" width="1.6" height="1.6"/><rect x="11.2" y="0.0" width="1.6" height="1.6"/><rect x="11.2" y="1.6" width="1.6" height="1.6"/><rect x="11.2" y="3.2" width="1.6" height="1.6"/><rect x="11.2" y="8.0" width="1.6" height="1.6"/><rect x="11.2" y="11.2" width="1.6" height="1.6"/><rect x="11.2" y="14.4" width="1.6" height="1.6"/><rect x="12.8" y="6.4" width="1.6" height="1.6"/><rect x="12.8" y="8.0" width="1.6" height="1.6"/><rect x="12.8" y="11.2" width="1.6" height="1.6"/><rect x="12.8" y="12.8" width="1.6" height="1.6"/><rect x="12.8" y="14.4" width="1.6" height="1.6"/><rect x="14.4" y="1.6" width="1.6" height="1.6"/><rect x="14.4" y="3.2" width="1.6" height="1.6"/><rect x="14.4" y="6.4" width="1.6" height="1.6"/><rect x="14.4" y="11.2" width="1.6" height="1.6"/><rect x="14.4" y="12.8" width="1.6" height="1.6"/></g></pattern>
<pattern id="ptex" width="12" height="12" patternUnits="userSpaceOnUse"><rect width="12" height="12" fill="#4f5c68"/><circle cx="7.7" cy="7.1" r="1.2" fill="#7f8b95"/><circle cx="5.2" cy="8.6" r="0.8" fill="#7f8b95"/><circle cx="5.2" cy="3.1" r="0.9" fill="#7f8b95"/><circle cx="0.1" cy="5.0" r="1.2" fill="#6d7a85"/><circle cx="4.5" cy="7.1" r="0.7" fill="#7f8b95"/><circle cx="5.6" cy="8.2" r="0.9" fill="#7f8b95"/><circle cx="8.9" cy="0.3" r="0.6" fill="#6d7a85"/><circle cx="11.6" cy="3.0" r="1.0" fill="#7f8b95"/><circle cx="2.1" cy="2.2" r="1.4" fill="#7f8b95"/><circle cx="3.6" cy="4.5" r="1.4" fill="#6d7a85"/><circle cx="11.7" cy="8.2" r="0.7" fill="#46525d"/><circle cx="7.8" cy="3.2" r="0.9" fill="#3e4953"/><circle cx="7.8" cy="1.2" r="1.2" fill="#7f8b95"/><circle cx="8.1" cy="2.7" r="1.5" fill="#46525d"/><circle cx="1.0" cy="8.9" r="0.8" fill="#3e4953"/><circle cx="3.2" cy="9.4" r="0.5" fill="#46525d"/><circle cx="3.8" cy="10.0" r="1.2" fill="#7f8b95"/><circle cx="4.1" cy="9.9" r="0.6" fill="#7f8b95"/><circle cx="7.1" cy="5.1" r="1.1" fill="#7f8b95"/><circle cx="5.6" cy="7.6" r="0.8" fill="#3e4953"/><circle cx="0.4" cy="5.0" r="0.7" fill="#3e4953"/><circle cx="11.3" cy="10.6" r="1.7" fill="#3e4953"/><circle cx="6.7" cy="11.8" r="1.4" fill="#6d7a85"/><circle cx="8.9" cy="10.0" r="1.3" fill="#7f8b95"/><circle cx="6.5" cy="10.7" r="1.5" fill="#7f8b95"/><circle cx="1.4" cy="2.9" r="0.5" fill="#46525d"/><circle cx="10.8" cy="10.8" r="1.2" fill="#6d7a85"/><circle cx="5.8" cy="1.4" r="1.1" fill="#46525d"/><circle cx="8.0" cy="6.3" r="1.0" fill="#6d7a85"/><circle cx="4.1" cy="3.0" r="1.5" fill="#3e4953"/><circle cx="9.7" cy="0.7" r="0.8" fill="#6d7a85"/><circle cx="6.4" cy="9.8" r="0.7" fill="#7f8b95"/><circle cx="11.1" cy="9.7" r="1.5" fill="#6d7a85"/><circle cx="5.9" cy="6.9" r="1.0" fill="#7f8b95"/><circle cx="3.0" cy="7.4" r="1.1" fill="#6d7a85"/><circle cx="5.7" cy="9.3" r="0.5" fill="#6d7a85"/><circle cx="9.3" cy="0.6" r="0.6" fill="#3e4953"/><circle cx="11.7" cy="10.3" r="0.6" fill="#3e4953"/><circle cx="3.8" cy="3.8" r="0.9" fill="#3e4953"/><circle cx="7.0" cy="4.3" r="0.7" fill="#7f8b95"/></pattern>
<clipPath id="ptop"><polygon points="205.7,3.6 349.8,80.3 204.8,171.5 60.7,94.8"/></clipPath>
</defs>
<rect width="412" height="106.4" fill="url(#pbg)"/>
<polygon points="60.7,94.8 60.7,131.1 204.8,207.7 204.8,171.5" fill="#c58a4c"/>
<polygon points="349.8,80.3 349.8,116.6 204.8,207.7 204.8,171.5" fill="#b97c40"/>
<polygon points="60.7,94.8 60.7,97.0 204.8,173.7 204.8,171.5" fill="#9a6a3a"/>
<polygon points="205.7,3.6 349.8,80.3 204.8,171.5 60.7,94.8" fill="#d9a262"/>
<g clip-path="url(#ptop)">
<polygon points="205.7,3.6 159.5,33.2 207.5,57.6 252.9,28.6" fill="#ddab6c"/>
<polygon points="159.5,33.2 106.0,64.9 392.5,231.7 446.8,195.4" fill="url(#ptex)"/>
<polygon points="252.9,28.6 298.2,50.4 84.3,186.4 29.9,159.2" fill="url(#ptex)"/>

<polygon points="133.2,75.8 182.2,46.8 270.1,95.3 222.0,126.5" fill="#e4e6e7"/>
<polygon points="142.3,74.3 185.8,52.2 198.5,59.5 156.8,83.0" fill="url(#pqr)"/>
<polygon points="162.2,83.9 202.1,63.1 261.9,93.9 225.7,113.8" fill="url(#pqr)"/>
</g>
</svg>
<div class="a" style="left:15px;top:1012px;width:1739px;height:1px;background:#e8ecef"></div>
<div class="a" style="left:15px;top:1013px;width:1739px;height:26px;background:#334150;border-radius:0 0 4px 0"></div>
<div class="t" style="left:24.70px;top:1019.00px;font-size:13px;line-height:13px;color:#e6e8ea;letter-spacing:0.105px;">StudioSystem © SoftwareStudio Sp. z o.o. - v2025.4.113.9244</div>
<div class="t" style="left:414.20px;top:1019.00px;font-size:13px;line-height:13px;color:#f28c34;letter-spacing:-0.257px;">Licencja: CLIENT</div>
<div class="t" style="left:1379.70px;top:1019.00px;font-size:13px;line-height:13px;color:#e6e8ea;letter-spacing:-0.083px;">| Komórka: MAGAZYN | Magazyn: 01 | Oddział: CEN | Firma: 01</div></body></html>
